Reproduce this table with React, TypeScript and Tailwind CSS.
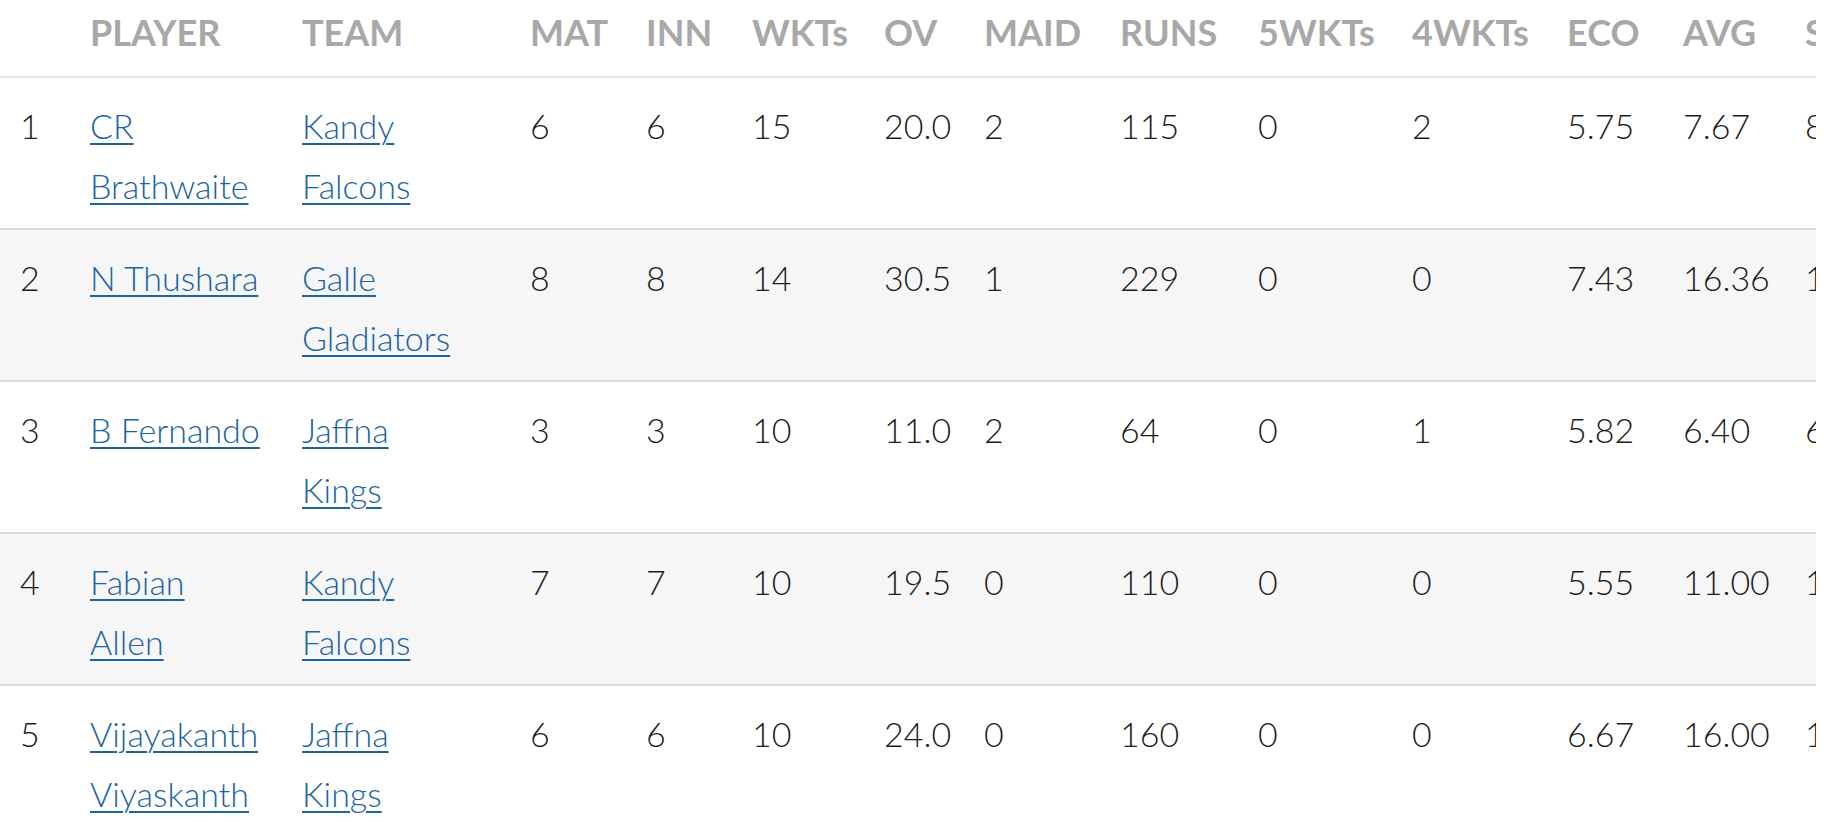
import React from 'react';

interface BowlerRow {
  rank: number;
  player: string;
  team: string;
  mat: string;
  inn: string;
  wkts: string;
  ov: string;
  maid: string;
  runs: string;
  fiveW: string;
  fourW: string;
  eco: string;
  avg: string;
  sr: string;
}

const rows: BowlerRow[] = [
  { rank: 1, player: 'CR Brathwaite', team: 'Kandy Falcons', mat: '6', inn: '6', wkts: '15', ov: '20.0', maid: '2', runs: '115', fiveW: '0', fourW: '2', eco: '5.75', avg: '7.67', sr: '8.00' },
  { rank: 2, player: 'N Thushara', team: 'Galle Gladiators', mat: '8', inn: '8', wkts: '14', ov: '30.5', maid: '1', runs: '229', fiveW: '0', fourW: '0', eco: '7.43', avg: '16.36', sr: '13.21' },
  { rank: 3, player: 'B Fernando', team: 'Jaffna Kings', mat: '3', inn: '3', wkts: '10', ov: '11.0', maid: '2', runs: '64', fiveW: '0', fourW: '1', eco: '5.82', avg: '6.40', sr: '6.60' },
  { rank: 4, player: 'Fabian Allen', team: 'Kandy Falcons', mat: '7', inn: '7', wkts: '10', ov: '19.5', maid: '0', runs: '110', fiveW: '0', fourW: '0', eco: '5.55', avg: '11.00', sr: '11.90' },
  { rank: 5, player: 'Vijayakanth Viyaskanth', team: 'Jaffna Kings', mat: '6', inn: '6', wkts: '10', ov: '24.0', maid: '0', runs: '160', fiveW: '0', fourW: '0', eco: '6.67', avg: '16.00', sr: '14.40' },
];

const headers = ['', 'PLAYER', 'TEAM', 'MAT', 'INN', 'WKTs', 'OV', 'MAID', 'RUNS', '5WKTs', '4WKTs', 'ECO', 'AVG', 'SR'];

const App: React.FC = () => {
  return (
    <div className="min-h-screen bg-white">
      <div className="w-[1816px] overflow-hidden">
        <table
          className="table-fixed border-collapse w-[1916px] text-[34px] leading-[60px] font-light text-[#1c1c1c]"
          style={{ fontFamily: 'Lato, "Open Sans", sans-serif' }}
        >
          <colgroup>
            <col className="w-[90px]" />
            <col className="w-[212px]" />
            <col className="w-[228px]" />
            <col className="w-[116px]" />
            <col className="w-[106px]" />
            <col className="w-[132px]" />
            <col className="w-[100px]" />
            <col className="w-[136px]" />
            <col className="w-[138px]" />
            <col className="w-[154px]" />
            <col className="w-[155px]" />
            <col className="w-[116px]" />
            <col className="w-[122px]" />
            <col className="w-[111px]" />
          </colgroup>
          <thead>
            <tr className="border-b-2 border-[#e6e6e6]">
              {headers.map((h, i) => (
                <th
                  key={i}
                  className={`pt-[2px] pb-[14px] text-left text-[36px] font-bold text-[#a8a8a8] whitespace-nowrap ${i === 0 ? 'pl-[20px]' : ''}`}
                >
                  {h}
                </th>
              ))}
            </tr>
          </thead>
          <tbody>
            {rows.map((r) => (
              <tr
                key={r.rank}
                className={`border-b-2 border-[#dcdcdc] align-top ${r.rank % 2 === 0 ? 'bg-[#f6f6f6]' : 'bg-white'}`}
              >
                <td className="pl-[20px] pt-[18px] pb-[12px]">{r.rank}</td>
                <td className="pt-[18px] pb-[12px] pr-[40px]">
                  <a href="#" className="text-[#1a64a4] underline decoration-[2px] underline-offset-[4px]">
                    {r.player}
                  </a>
                </td>
                <td className="pt-[18px] pb-[12px] pr-[68px]">
                  <a href="#" className="text-[#1a64a4] underline decoration-[2px] underline-offset-[4px]">
                    {r.team}
                  </a>
                </td>
                <td className="pt-[18px] pb-[12px]">{r.mat}</td>
                <td className="pt-[18px] pb-[12px]">{r.inn}</td>
                <td className="pt-[18px] pb-[12px]">{r.wkts}</td>
                <td className="pt-[18px] pb-[12px]">{r.ov}</td>
                <td className="pt-[18px] pb-[12px]">{r.maid}</td>
                <td className="pt-[18px] pb-[12px]">{r.runs}</td>
                <td className="pt-[18px] pb-[12px]">{r.fiveW}</td>
                <td className="pt-[18px] pb-[12px]">{r.fourW}</td>
                <td className="pt-[18px] pb-[12px]">{r.eco}</td>
                <td className="pt-[18px] pb-[12px]">{r.avg}</td>
                <td className="pt-[18px] pb-[12px] whitespace-nowrap">{r.sr}</td>
              </tr>
            ))}
          </tbody>
        </table>
      </div>
    </div>
  );
};

export default App;
